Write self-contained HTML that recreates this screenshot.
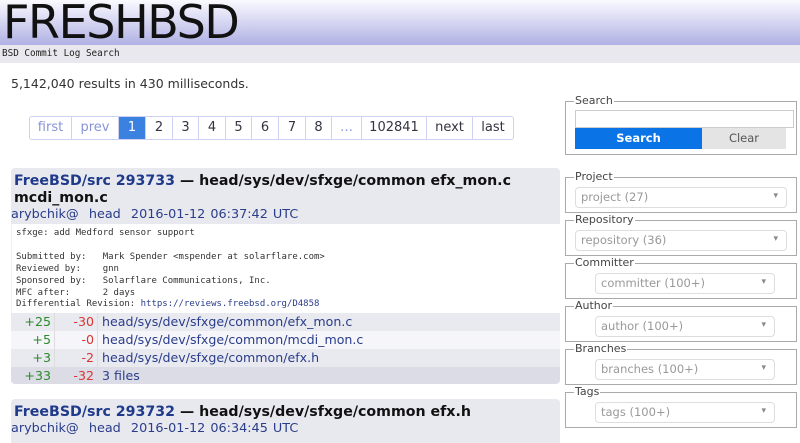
<!DOCTYPE html><html><head><meta charset="utf-8"><style>
*{box-sizing:border-box;margin:0;padding:0}
body{width:800px;height:443px;overflow:hidden;background:#fff;font-family:"DejaVu Sans","Liberation Sans",sans-serif;position:relative;color:#222}
.a{position:absolute}
#hd{left:0;top:0;width:800px;height:45px;background:linear-gradient(#fafaff,#b0b0e4)}
#logo{left:3px;top:-5px;font-size:46px;color:#111;font-family:"DejaVu Sans",sans-serif;letter-spacing:-1.4px}
#sub{left:0;top:45px;width:800px;height:18px;background:#e8e8ee;font:9.3px "DejaVu Sans Mono",monospace;padding:3px 0 0 2px}
#pg{left:29px;top:116px;height:24px;display:flex;border:1px solid #cfd2f2;border-radius:3px;font-size:13px}
#pg div{height:22px;line-height:22px;text-align:center;border-right:1px solid #cfd2f2;color:#334}
#pg .g{color:#8894d8}
#pg .c{background:#3b82e0;color:#fff}
.hdr{left:11px;width:549px;background:#e8e8ef;border-radius:4px 4px 0 0;padding:5px 0 0 3px}
.t{font-size:14.2px;font-weight:bold;line-height:17px;color:#111}
.t b{color:#1f3a8a}
.m{font-size:12.8px;color:#2a3d8a;word-spacing:1px}
.body{left:11px;top:224px;width:549px;height:89px;font:9px "DejaVu Sans Mono",monospace;line-height:11.9px;padding:4px 4px;white-space:pre;color:#333;border-left:1px solid #eee}
.row{left:11px;width:549px;height:18px;font-size:12.6px;line-height:18px;display:flex}
.row .p{width:44px;text-align:right;color:#2a8a2a;padding-right:3px;border-right:1px solid #ddd}
.row .n{width:43px;text-align:right;color:#d33;padding-right:3px;border-right:1px solid #ddd}
.row .f{padding-left:4px;color:#2a3d8a}
.fs{position:absolute;left:565px;width:232px;border:1px solid #aaa;font-size:11px;color:#444}
.lg{position:absolute;left:8px;top:-7px;background:#fff;padding:0 1px;font-size:11px;line-height:12px}
.sel{position:absolute;height:21px;border:1px solid #ddd;border-radius:4px;font-size:11.5px;color:#999;padding:2px 0 0 5px}
.sel:after{content:"▾";position:absolute;right:8px;top:3px;font-size:9px;color:#888}
</style></head><body>
<div class="a" id="hd"></div>
<div class="a" id="logo">FRESHBSD</div>
<div class="a" id="sub">BSD Commit Log Search</div>
<div class="a" style="left:11px;top:76px;font-size:12.5px;color:#333">5,142,040 results in 430 milliseconds.</div>
<div class="a" id="pg">
<div class="g" style="width:42px">first</div><div class="g" style="width:47px">prev</div><div class="c" style="width:27px">1</div><div style="width:27px">2</div><div style="width:26px">3</div><div style="width:27px">4</div><div style="width:26px">5</div><div style="width:27px">6</div><div style="width:27px">7</div><div style="width:26px">8</div><div class="g" style="width:30px">…</div><div style="width:65px">102841</div><div style="width:46px">next</div><div style="width:40px;border:0">last</div></div>

<div class="a hdr" style="top:168px;height:56px"><div class="t"><b>FreeBSD/src 293733</b> — head/sys/dev/sfxge/common efx_mon.c<br>mcdi_mon.c</div></div>
<div class="a m" style="left:11px;top:207px">arybchik@ &nbsp;head &nbsp;2016-01-12 06:37:42 UTC</div>
<div class="a body">sfxge: add Medford sensor support

Submitted by:   Mark Spender &lt;mspender at solarflare.com&gt;
Reviewed by:    gnn
Sponsored by:   Solarflare Communications, Inc.
MFC after:      2 days
Differential Revision: <span style="color:#2a3d8a">https://reviews.freebsd.org/D4858</span></div>
<div class="a row" style="top:313px;background:#e9e9f0"><div class="p">+25</div><div class="n">-30</div><div class="f">head/sys/dev/sfxge/common/efx_mon.c</div></div>
<div class="a row" style="top:331px;background:#f5f5fa"><div class="p">+5</div><div class="n">-0</div><div class="f">head/sys/dev/sfxge/common/mcdi_mon.c</div></div>
<div class="a row" style="top:349px;background:#e9e9f0"><div class="p">+3</div><div class="n">-2</div><div class="f">head/sys/dev/sfxge/common/efx.h</div></div>
<div class="a row" style="top:367px;height:17px;background:#dcdce6;border-radius:0 0 4px 4px"><div class="p">+33</div><div class="n">-32</div><div class="f">3 files</div></div>

<div class="a hdr" style="top:399px;height:44px"><div class="t"><b>FreeBSD/src 293732</b> — head/sys/dev/sfxge/common efx.h</div></div>
<div class="a m" style="left:11px;top:421px">arybchik@ &nbsp;head &nbsp;2016-01-12 06:34:45 UTC</div>

<div class="fs" style="top:101px;height:54px"><div class="lg">Search</div>
<div class="a" style="left:9px;top:8px;width:219px;height:18px;border:1px solid #ccc"></div>
<div class="a" style="left:9px;top:26px;width:127px;height:21px;background:#0a74e6;color:#fff;font-weight:bold;text-align:center;line-height:21px;font-size:11.5px">Search</div>
<div class="a" style="left:136px;top:26px;width:84px;height:21px;background:#e4e4e4;color:#555;text-align:center;line-height:21px;font-size:11.5px">Clear</div></div>
<div class="fs" style="top:177px;height:36px"><div class="lg">Project</div><div class="sel" style="left:9px;top:9px;width:212px">project (27)</div></div>
<div class="fs" style="top:220px;height:36px"><div class="lg">Repository</div><div class="sel" style="left:9px;top:9px;width:212px">repository (36)</div></div>
<div class="fs" style="top:263px;height:36px"><div class="lg">Committer</div><div class="sel" style="left:29px;top:9px;width:180px">committer (100+)</div></div>
<div class="fs" style="top:306px;height:36px"><div class="lg">Author</div><div class="sel" style="left:29px;top:9px;width:180px">author (100+)</div></div>
<div class="fs" style="top:349px;height:36px"><div class="lg">Branches</div><div class="sel" style="left:29px;top:9px;width:180px">branches (100+)</div></div>
<div class="fs" style="top:392px;height:36px"><div class="lg">Tags</div><div class="sel" style="left:29px;top:9px;width:180px">tags (100+)</div></div>
</body></html>
